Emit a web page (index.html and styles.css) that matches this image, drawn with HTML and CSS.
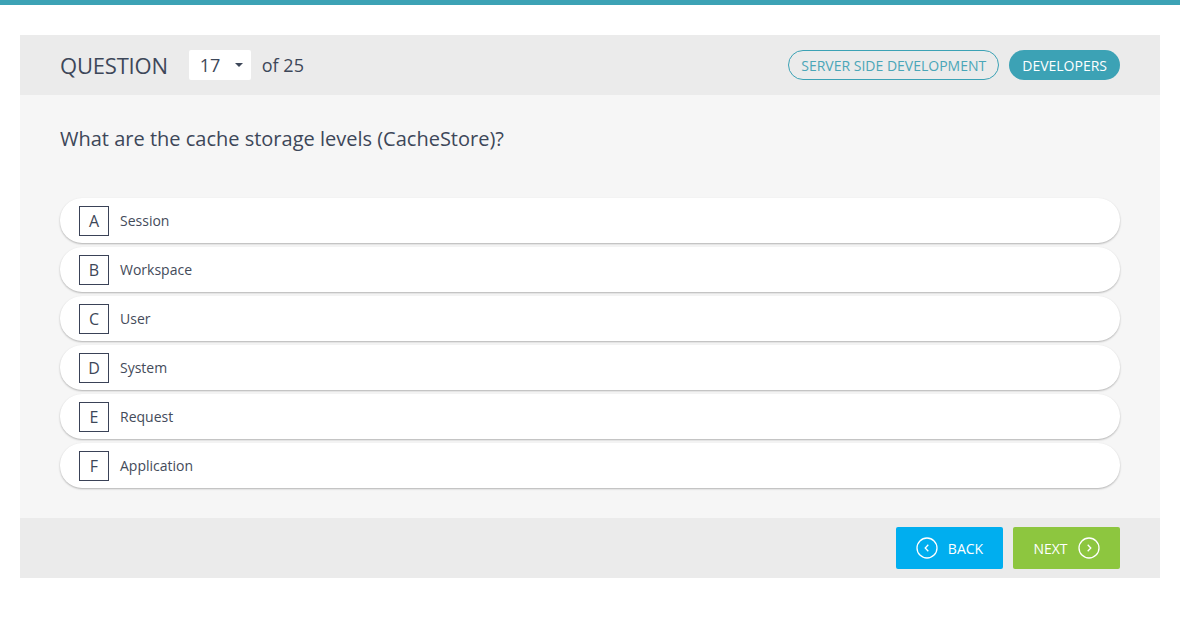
FILE: index.html
```html
<!DOCTYPE html>
<html lang="en">
<head>
<meta charset="utf-8">
<title>Question 17 of 25</title>
<link rel="stylesheet" href="styles.css">
</head>
<body>
<div class="topbar"></div>
<main class="quiz">
  <header class="quiz-head">
    <div class="head-left">
      <span class="q-label">QUESTION</span>
      <span class="q-select">17 <span class="caret"></span></span>
      <span class="q-total">of 25</span>
    </div>
    <div class="head-right">
      <span class="tag tag-outline">SERVER SIDE DEVELOPMENT</span>
      <span class="tag tag-fill">DEVELOPERS</span>
    </div>
  </header>
  <section class="quiz-body">
    <h1 class="question">What are the cache storage levels (CacheStore)?</h1>
    <ul class="options">
      <li class="option"><span class="letter">A</span><span class="opt-text">Session</span></li>
      <li class="option"><span class="letter">B</span><span class="opt-text">Workspace</span></li>
      <li class="option"><span class="letter">C</span><span class="opt-text">User</span></li>
      <li class="option"><span class="letter">D</span><span class="opt-text">System</span></li>
      <li class="option"><span class="letter">E</span><span class="opt-text">Request</span></li>
      <li class="option"><span class="letter">F</span><span class="opt-text">Application</span></li>
    </ul>
  </section>
  <footer class="quiz-foot">
    <button class="btn btn-back">
      <svg class="ico" width="22" height="22" viewBox="0 0 22 22"><circle cx="11" cy="11" r="10" fill="none" stroke="#fff" stroke-width="1.3"/><path d="M12.3 7.8 L9.2 11 L12.3 14.2" fill="none" stroke="#fff" stroke-width="1.3"/></svg>
      BACK
    </button>
    <button class="btn btn-next">
      NEXT
      <svg class="ico" width="22" height="22" viewBox="0 0 22 22"><circle cx="11" cy="11" r="10" fill="none" stroke="#fff" stroke-width="1.3"/><path d="M9.7 7.8 L12.8 11 L9.7 14.2" fill="none" stroke="#fff" stroke-width="1.3"/></svg>
    </button>
  </footer>
</main>
</body>
</html>
```

FILE: styles.css
```css
* { box-sizing: border-box; }
html, body { margin: 0; padding: 0; background: #fff; }
body { font-family: "Open Sans", "Noto Sans", sans-serif; color: #3d4759; }

.topbar { height: 5px; background: #3ca2b5; }

.quiz { margin: 30px 20px 0; }

.quiz-head {
  height: 60px;
  background: #ebebeb;
  display: flex;
  align-items: center;
  justify-content: space-between;
  padding: 0 40px;
}
.head-left { display: flex; align-items: center; }
.q-label { font-size: 22px; color: #3d4759; letter-spacing: -0.2px; }
.q-select {
  margin-left: 21px;
  width: 62px;
  height: 30px;
  background: #fff;
  border-radius: 2px;
  display: flex;
  align-items: center;
  padding-left: 11px;
  font-size: 18px;
  color: #3d4759;
}
.caret {
  margin-left: 15px;
  width: 0; height: 0;
  border-left: 4px solid transparent;
  border-right: 4px solid transparent;
  border-top: 4px solid #3d4759;
}
.q-total { margin-left: 11px; font-size: 18px; color: #3d4759; }

.head-right { display: flex; align-items: center; gap: 10px; }
.tag {
  height: 30px;
  border-radius: 15px;
  display: flex;
  align-items: center;
  padding: 0 12px;
  font-size: 14px;
}
.tag-outline { border: 1px solid #3ca2b5; color: #4aa6b8; }
.tag-fill { background: #3ca2b5; color: #fff; padding: 0 13px; }

.quiz-body { background: #f6f6f6; padding: 30px 40px 30px; }
.question {
  margin: 0 0 45px;
  font-size: 20px;
  line-height: 28px;
  font-weight: 400;
  color: #3d4759;
}
.options { list-style: none; margin: 0; padding: 0; display: flex; flex-direction: column; gap: 4px; }
.option {
  height: 45px;
  background: #fff;
  border-radius: 22px;
  box-shadow: 0 1px 2px rgba(0,0,0,0.28);
  display: flex;
  align-items: center;
  padding-left: 19px;
}
.letter {
  width: 30px; height: 30px;
  border: 1px solid #3a4257;
  display: flex; align-items: center; justify-content: center;
  font-size: 16px;
  color: #3d4759;
}
.opt-text { margin-left: 11px; font-size: 14px; color: #444b5a; }

.quiz-foot {
  height: 60px;
  background: #ebebeb;
  display: flex;
  align-items: center;
  justify-content: flex-end;
  padding-right: 40px;
  gap: 10px;
}
.btn {
  height: 42px;
  width: 107px;
  border: 0;
  border-radius: 2px;
  color: #fff;
  font-family: "Open Sans", "Noto Sans", sans-serif;
  font-size: 14px;
  display: flex;
  align-items: center;
  justify-content: center;
  gap: 10px;
  padding: 0;
}
.btn-back { background: #00aeef; }
.btn-next { background: #8dc63f; }
.ico { display: block; }
```
